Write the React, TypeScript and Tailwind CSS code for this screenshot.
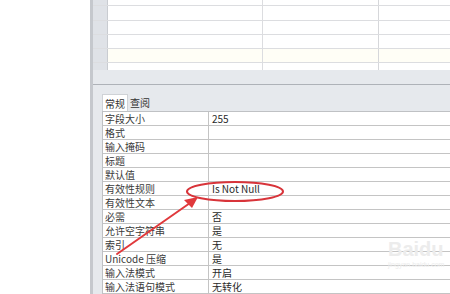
import React from "react";

const font = { fontFamily: '"Noto Sans CJK SC", "Noto Sans", sans-serif' };

const props: [string, string][] = [
  ["字段大小", "255"],
  ["格式", ""],
  ["输入掩码", ""],
  ["标题", ""],
  ["默认值", ""],
  ["有效性规则", "Is Not Null"],
  ["有效性文本", ""],
  ["必需", "否"],
  ["允许空字符串", "是"],
  ["索引", "无"],
  ["Unicode 压缩", "是"],
  ["输入法模式", "开启"],
  ["输入法语句模式", "无转化"],
];

// heights of the datasheet rows visible at the top
const sheetRows = [6, 15, 14, 14, 14, 7];

export default function App() {
  return (
    <div className="relative flex h-[294px] w-[450px] overflow-hidden bg-white text-[#333]" style={font}>
      <div className="w-[90px] shrink-0 bg-white" />
      <div className="flex min-w-0 flex-1 flex-col border-l-[3px] border-[#c5c8cd] bg-[#e6e9ed]">
        {/* datasheet */}
        <div className="flex flex-col">
          {sheetRows.map((h, i) => (
            <div key={i} className={`flex ${i < sheetRows.length - 1 ? "border-b border-[#dcdde0]" : ""}`} style={{ height: h }}>
              <div className="w-[15px] shrink-0 border-r border-[#c9ccd1] bg-[#dfe2e7]" />
              <div className={`w-[155px] shrink-0 border-r border-[#dcdde0] ${i === 4 ? "bg-[#fffef6]" : "bg-white"}`} />
              <div className={`w-[116px] shrink-0 border-r border-[#d6d7da] ${i === 4 ? "bg-[#fffef6]" : "bg-white"}`} />
              <div className={`flex-1 ${i === 4 ? "bg-[#fffef6]" : "bg-white"}`} />
            </div>
          ))}
        </div>
        <div className="h-[15px] shrink-0 border-b border-[#aeb2b8] bg-[#e6e9ed]" />

        {/* property pane */}
        <div className="flex flex-1 flex-col pl-[9px] pt-[9px]">
          <div className="flex h-[17px] items-end text-[10px] leading-[15px]">
            <div className="h-[17px] border border-b-0 border-[#cfd2d6] bg-white px-[2px] pt-[1px]">常规</div>
            <div className="px-[2px] pb-[1px]">查阅</div>
          </div>
          <div className="border-l border-t border-[#bfc1c4] bg-white">
            {props.map(([k, v]) => (
              <div key={k} className="flex h-[14px] border-b border-[#c4c4c4] text-[10px] leading-[13px]">
                <div className="w-[106px] shrink-0 border-r border-[#c4c4c4] pl-[2px] text-[#3a3a3a]">{k}</div>
                <div className="flex-1 pl-[3px] text-[#2a2a2a]">{v}</div>
              </div>
            ))}
          </div>
        </div>
      </div>

      {/* annotation: ellipse and arrow */}
      <svg className="pointer-events-none absolute left-0 top-0" width="450" height="294" viewBox="0 0 450 294">
        <ellipse cx="235" cy="191.5" rx="48" ry="9.5" fill="none" stroke="#d8343a" strokeWidth="2" />
        <path d="M117 254 L190 203" stroke="#e0393c" strokeWidth="2" strokeLinecap="round" />
        <path d="M198 197 L184 200 L192 208 Z" fill="#e0393c" />
      </svg>

      {/* watermark */}
      <div className="pointer-events-none absolute left-[388px] top-[238px] flex flex-col text-[#ececec]" style={{ fontFamily: '"Liberation Sans", sans-serif' }}>
        <span className="text-[20px] font-bold leading-[22px]">Baidu</span>
        <span className="text-[7px] leading-[10px]">jingyan.baidu.com</span>
      </div>
    </div>
  );
}
